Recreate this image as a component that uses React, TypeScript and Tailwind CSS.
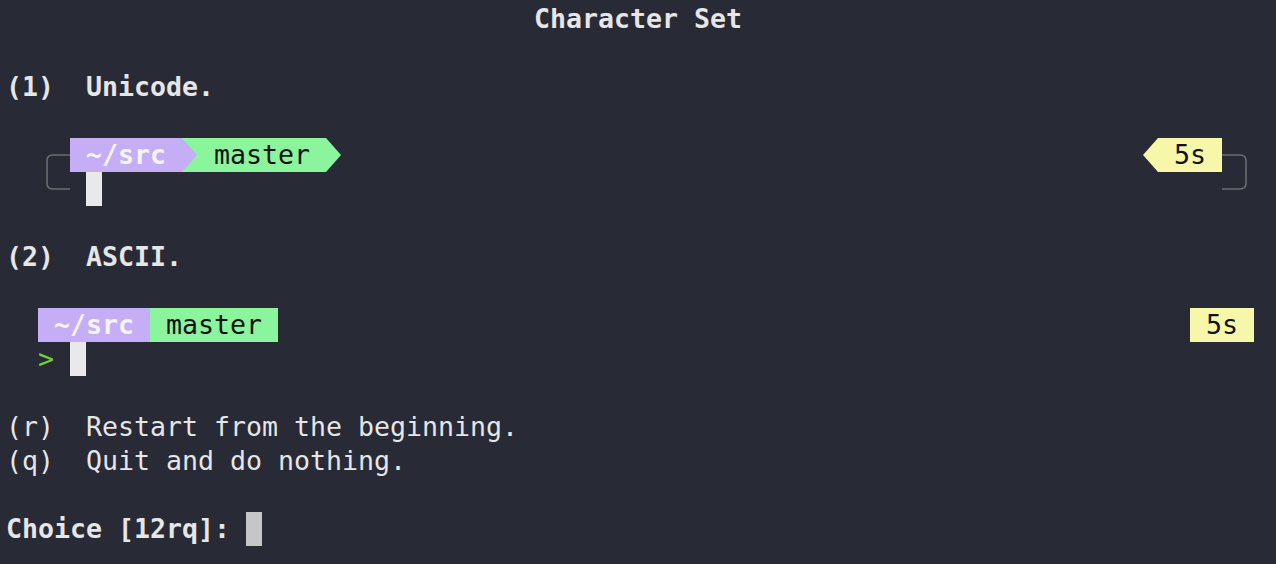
import type { ReactNode } from "react";

const PURPLE = "#c6aef6";
const GREEN = "#8af59c";
const YELLOW = "#f6f7a8";
const FRAME = "#6c6d72";

const Row = ({ children, className = "" }: { children?: ReactNode; className?: string }) => (
  <div className={`flex h-[34px] items-center whitespace-pre ${className}`}>{children}</div>
);

const Seg = ({ bg, className = "", children }: { bg: string; className?: string; children: ReactNode }) => (
  <span className={`flex h-full items-center ${className}`} style={{ backgroundColor: bg }}>
    {children}
  </span>
);

// powerline arrow, one cell wide
const Arrow = ({ fill, bg, left }: { fill: string; bg?: string; left?: boolean }) => (
  <svg width="16" height="34" viewBox="0 0 16 34" className="shrink-0" style={{ backgroundColor: bg }}>
    <polygon points={left ? "16,0 1,17 16,34" : "0,0 15,17 0,34"} fill={fill} />
  </svg>
);

// box drawing corners, two cells wide
const Frame = ({ d }: { d: string }) => (
  <svg width="32" height="34" viewBox="0 0 32 34" className="shrink-0">
    <path d={d} fill="none" stroke={FRAME} strokeWidth="1.6" />
  </svg>
);

const Cursor = ({ color = "#e9e9e9" }: { color?: string }) => (
  <span className="inline-block h-[34px] w-[16px]" style={{ backgroundColor: color }} />
);

export default function App() {
  return (
    <div className="h-[564px] w-full overflow-hidden bg-[#282a36] px-[6px] pt-[2px] font-['DejaVu_Sans_Mono',monospace] text-[26.58px] leading-[34px] text-[#e6e6e6]">
      <Row className="pl-[528px] font-bold">Character Set</Row>
      <Row />
      <Row className="font-bold">(1)  Unicode.</Row>
      <Row />

      {/* unicode prompt */}
      <Row>
        <span className="w-[32px]" />
        <Frame d="M32,17 H15 Q9,17 9,23 V34" />
        <Seg bg={PURPLE} className="font-bold text-[#f4f4f4]">{" ~/src "}</Seg>
        <Arrow fill={PURPLE} bg={GREEN} />
        <Seg bg={GREEN} className="text-[#111]">{" master "}</Seg>
        <Arrow fill={GREEN} />
        <span className="flex-1" />
        <Arrow fill={YELLOW} left />
        <Seg bg={YELLOW} className="text-[#111]">{" 5s "}</Seg>
        <Frame d="M0,17 H18 Q24,17 24,23 V34" />
        <span className="w-[16px]" />
      </Row>
      <Row>
        <span className="w-[32px]" />
        <Frame d="M9,0 V11 Q9,17 15,17 H32" />
        <span className="w-[16px]" />
        <Cursor />
        <span className="flex-1" />
        <Frame d="M24,0 V11 Q24,17 18,17 H0" />
        <span className="w-[16px]" />
      </Row>
      <Row />
      <Row className="font-bold">(2)  ASCII.</Row>
      <Row />

      {/* ascii prompt */}
      <Row>
        <span className="w-[32px]" />
        <Seg bg={PURPLE} className="font-bold text-[#f4f4f4]">{" ~/src "}</Seg>
        <Seg bg={GREEN} className="text-[#111]">{" master "}</Seg>
        <span className="flex-1" />
        <Seg bg={YELLOW} className="text-[#111]">{" 5s "}</Seg>
        <span className="w-[16px]" />
      </Row>
      <Row>
        <span className="w-[32px]" />
        <span className="text-[#72cf3a]">{"> "}</span>
        <Cursor />
      </Row>
      <Row />
      <Row>(r)  Restart from the beginning.</Row>
      <Row>(q)  Quit and do nothing.</Row>
      <Row />
      <Row className="font-bold">
        {"Choice [12rq]: "}
        <Cursor color="#c6c6c6" />
      </Row>
    </div>
  );
}
